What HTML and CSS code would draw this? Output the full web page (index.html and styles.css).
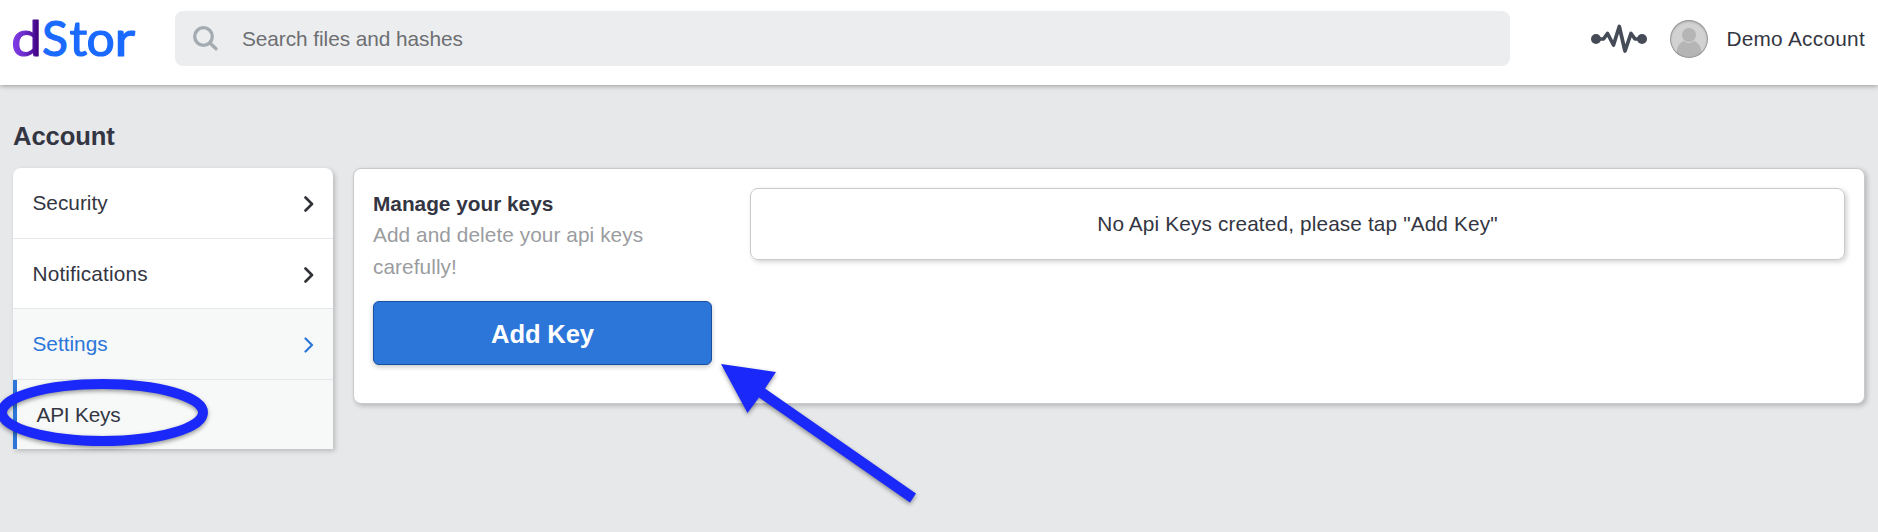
FILE: index.html
```html
<!DOCTYPE html>
<html lang="en">
<head>
<meta charset="utf-8">
<title>dStor – API Keys</title>
<link rel="stylesheet" href="styles.css">
</head>
<body>
<header class="topbar">
  <svg class="logo" width="126" height="48" viewBox="0 0 126 48" role="img" aria-label="dStor">
    <defs>
      <linearGradient id="purple" gradientUnits="userSpaceOnUse" x1="2" y1="0" x2="24" y2="0">
        <stop offset="0" stop-color="#7f3be6"/>
        <stop offset=".45" stop-color="#6a2bc8"/>
        <stop offset="1" stop-color="#3f0080"/>
      </linearGradient>
    </defs>
    <g class="logo-text">
      <text class="logo-d" transform="translate(-.8 42) scale(1.14 1)">d</text>
      <text transform="translate(30 41.500)">S</text>
      <text transform="translate(57.500 41.500) scale(1.03 1)">t</text>
      <text transform="translate(74.500 41.500) scale(1.04 1)">o</text>
      <text transform="translate(102.500 41.500) scale(1.18 1)">r</text>
    </g>
  </svg>
  <div class="search">
    <svg class="search-icon" width="26" height="26" viewBox="0 0 26 26"><circle cx="10.5" cy="10.5" r="8.8"/><path d="M17 17l6 5.8"/></svg>
    <span class="search-text">Search files and hashes</span>
  </div>
  <div class="user">
    <svg class="pulse" width="56" height="30" viewBox="0 0 56 30">
      <circle cx="5" cy="15" r="5"/><circle cx="51" cy="15" r="5"/>
      <path d="M5 15h7.500l4-5.500 6 11.500 5.800-18.500 5.700 24.500 6-17.500 4 5.500h7"/>
    </svg>
    <div class="avatar">
      <svg width="38" height="38" viewBox="0 0 38 38"><path d="M6.500 38V34C6.500 25 11.500 20 19 20s12.500 5 12.500 14v4z"/><circle cx="19" cy="15" r="7.500"/></svg>
    </div>
    <span class="user-name">Demo Account</span>
  </div>
</header>
<main class="page">
  <h1 class="title">Account</h1>
  <div class="columns">
    <nav class="menu">
      <a class="item"><span>Security</span><svg class="chevron" width="10" height="16" viewBox="0 0 10 16"><path d="M1.500 1.500L8 8l-6.500 6.500"/></svg></a>
      <a class="item"><span class="notifications">Notifications</span><svg class="chevron" width="10" height="16" viewBox="0 0 10 16"><path d="M1.500 1.500L8 8l-6.500 6.500"/></svg></a>
      <a class="item open"><span>Settings</span><svg class="chevron" width="10" height="16" viewBox="0 0 10 16"><path d="M1.500 1.500L8 8l-6.500 6.500"/></svg></a>
      <a class="item sub"><span>API Keys</span></a>
    </nav>
    <section class="card">
      <div class="intro">
        <h2 class="card-title">Manage your keys</h2>
        <p class="card-text">Add and delete your api keys<br>carefully!</p>
        <button class="add">Add Key</button>
      </div>
      <div class="empty"><span>No Api Keys created, please tap "Add Key"</span></div>
    </section>
  </div>
</main>
<svg class="marks" width="1878" height="532" viewBox="0 0 1878 532">
  <ellipse cx="102.500" cy="412.500" rx="100.500" ry="28.500"/>
  <path d="M721 364l55 8-11 16.500 151 105-6 9-151-105-11.500 15.500z"/>
</svg>
</body>
</html>
```
FILE: styles.css
```css
* { box-sizing: border-box; }
body {
  margin: 0;
  height: 532px;
  overflow: hidden;
  background: #e7e8ea;
  color: #333642;
  font: 20.8px/32px "Liberation Sans", Arial, sans-serif;
}
.topbar {
  display: flex;
  align-items: flex-start;
  height: 85px;
  padding: 11px 13px 0 12px;
  background: #fff;
  box-shadow: 0 1px 5px rgba(0, 10, 10, .35);
}
.logo { margin: 3px 37px 0 0; overflow: visible; }
.logo-text {
  font-family: Lato, sans-serif;
  font-size: 48px;
  fill: #1b6aff;
  stroke: #1b6aff;
  stroke-width: 1.2px;
  stroke-linejoin: round;
}
.logo-d { fill: url(#purple); stroke: url(#purple); }
.search {
  display: flex;
  align-items: center;
  width: 1335px;
  height: 55px;
  padding-left: 18px;
  border-radius: 8px;
  background: #ecedef;
  color: #6d6f72;
}
.search-icon { margin-right: 23px; fill: none; stroke: #a4abb1; stroke-width: 3.3; stroke-linecap: round; }
.search-text { letter-spacing: -.05px; }
.user { display: flex; align-items: center; margin-left: auto; height: 55px; }
.user-name { letter-spacing: .28px; }
.pulse { fill: #454b57; }
.pulse path { fill: none; stroke: #454b57; stroke-width: 3.7; stroke-linejoin: round; }
.avatar {
  width: 38px;
  height: 38px;
  margin: 0 18px 0 23px;
  border-radius: 50%;
  background: #d2d2d2;
  overflow: hidden;
  position: relative;
}
.avatar::after {
  content: "";
  position: absolute;
  inset: 0;
  border-radius: 50%;
  box-shadow: inset 0 0 0 1px #999, inset 0 1px 3px rgba(0, 0, 0, .3);
}
.avatar svg { display: block; fill: #b5b5b5; }
.avatar circle { stroke: #d2d2d2; }
.page { padding: 35px 13px 0; }
.title { margin: 0 0 16px; font-size: 25.6px; line-height: 32px; letter-spacing: -.1px; }
.columns { display: flex; align-items: flex-start; gap: 20px; }
.menu {
  width: 320px;
  border-radius: 8px 8px 0 0;
  background: #fff;
  box-shadow: 2px 2px 5px rgba(0, 0, 0, .2);
}
.item {
  display: flex;
  align-items: center;
  justify-content: space-between;
  height: 71px;
  padding: 0 19.5px;
  border-bottom: 1px solid #e4e7e9;
}
.item:nth-child(2) { height: 70px; }
.item:first-child { border-radius: 8px 8px 0 0; }
.notifications { letter-spacing: .15px; }
.chevron { margin-top: 2px; fill: none; stroke: #2f3136; stroke-width: 2.6; stroke-linecap: round; stroke-linejoin: round; }
.open { background: #f7f9f8; color: #2c76d9; }
.open .chevron { stroke: #2c76d9; stroke-width: 2.2; }
.sub {
  height: 69px;
  border-left: 4px solid #2c76d9;
  border-bottom: 0;
  background: #f7f9f8;
  letter-spacing: -.2px;
}
.card {
  display: flex;
  flex: 1;
  height: 236px;
  padding: 19px;
  border: 1px solid #c9cacc;
  border-radius: 8px;
  background: #fff;
  box-shadow: 2px 2px 5px rgba(0, 0, 0, .22);
}
.intro { width: 339px; margin-right: 38px; }
.card-title { margin: 0; font-size: 20.8px; line-height: 31px; }
.card-text { margin: 0; color: #9a9ca0; letter-spacing: .07px; }
.add {
  display: block;
  width: 339px;
  height: 64px;
  margin-top: 18px;
  padding: 3px 0 0;
  border: 1px solid #17509f;
  border-radius: 6px;
  background: #2c76d9;
  color: #fff;
  font: bold 25.6px/1 "Liberation Sans", Arial, sans-serif;
  letter-spacing: -.15px;
  box-shadow: 0 2px 5px rgba(0, 0, 0, .22);
}
.empty {
  display: flex;
  flex: 1;
  align-items: center;
  justify-content: center;
  height: 72px;
  border: 1px solid #c9cacc;
  border-radius: 8px;
  letter-spacing: .13px;
  box-shadow: 2px 2px 5px rgba(0, 0, 0, .18);
}
.marks {
  position: absolute;
  inset: 0;
  pointer-events: none;
  fill: #1a29f9;
  filter: drop-shadow(0 2px 2px rgba(0, 0, 0, .4));
}
.marks ellipse { fill: none; stroke: #1a29f9; stroke-width: 10; }
```
